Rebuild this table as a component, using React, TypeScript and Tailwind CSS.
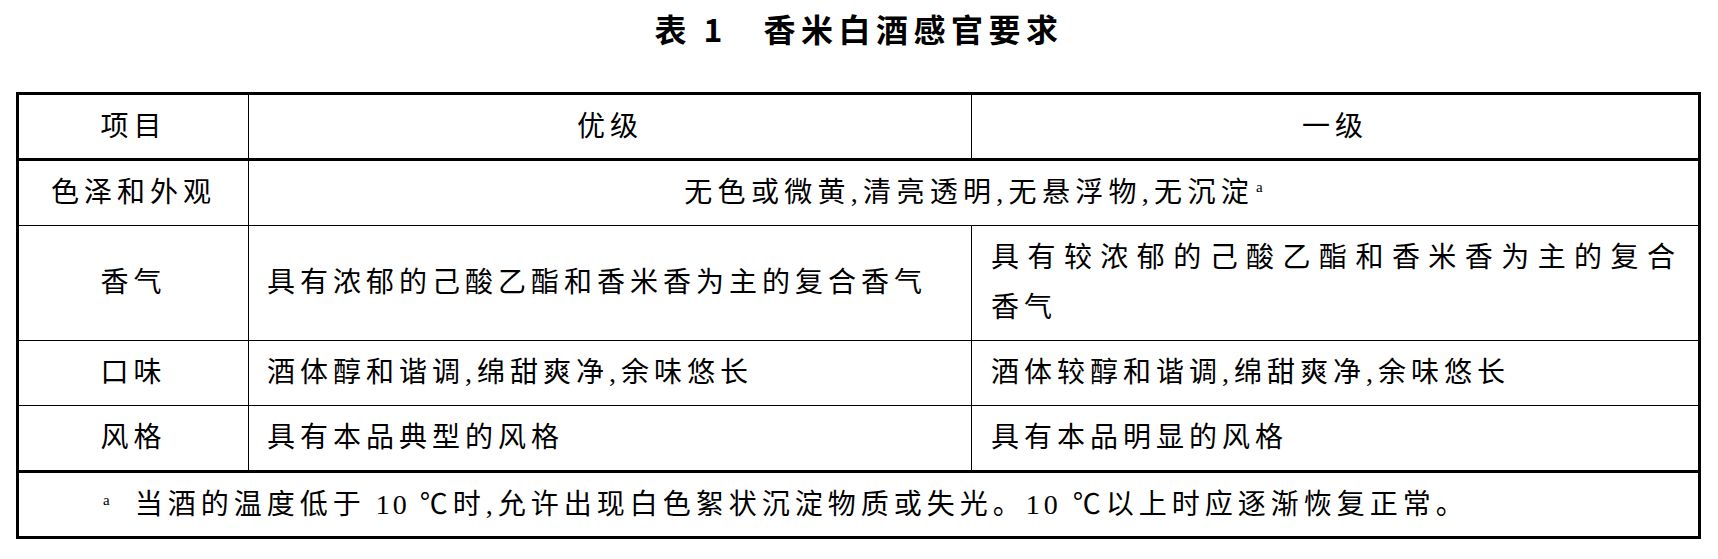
import React from "react";

const cellBase = "flex items-center";
const col1 = "w-[230px] shrink-0 border-r border-black flex items-center justify-center";
const col2 = "w-[723px] shrink-0 border-r border-black flex items-center";
const col3 = "flex-1 flex items-center";

function Sup() {
  return <span className="text-[15px] tracking-normal align-super leading-none ml-[2px]">a</span>;
}

export default function App() {
  return (
    <div className="w-[1718px] h-[559px] bg-white text-black overflow-hidden">
      <div className="h-[55px] flex items-center justify-center font-['Noto_Sans_CJK_SC',sans-serif] font-bold text-[32px] leading-none">
        <span>表</span>
        <span className="ml-[17px]">1</span>
        <span className="ml-[41px] tracking-[5.5px]">香米白酒感官要求</span>
      </div>
      <div className="mt-[37px] ml-[16px] w-[1685px] border-[3px] border-black font-['Liberation_Serif','Noto_Sans_CJK_SC',serif] text-[28px] tracking-[5px] leading-none">
        {/* header */}
        <div className="flex h-[66px] border-b-[3px] border-black">
          <div className={col1}>项目</div>
          <div className={col2 + " justify-center"}>优级</div>
          <div className={col3 + " justify-center"}>一级</div>
        </div>
        {/* row 2 */}
        <div className="flex h-[65px] border-b border-black">
          <div className={col1}>色泽和外观</div>
          <div className={"flex-1 " + cellBase + " justify-center"}>
            <span className="tracking-[5.3px]">
              无色或微黄,清亮透明,无悬浮物,无沉淀
              <Sup />
            </span>
          </div>
        </div>
        {/* row 3 */}
        <div className="flex h-[115px] border-b border-black">
          <div className={col1}>香气</div>
          <div className={col2 + " pl-[18px]"}>具有浓郁的己酸乙酯和香米香为主的复合香气</div>
          <div className={col3 + " pl-[19px] pr-[18px]"}>
            <div className="w-full leading-[50px]">
              <div className="text-justify [text-align-last:justify]">具有较浓郁的己酸乙酯和香米香为主的复合</div>
              <div>香气</div>
            </div>
          </div>
        </div>
        {/* row 4 */}
        <div className="flex h-[65px] border-b border-black">
          <div className={col1}>口味</div>
          <div className={col2 + " pl-[18px]"}>酒体醇和谐调,绵甜爽净,余味悠长</div>
          <div className={col3 + " pl-[19px]"}>酒体较醇和谐调,绵甜爽净,余味悠长</div>
        </div>
        {/* row 5 */}
        <div className="flex h-[67px] border-b-[3px] border-black">
          <div className={col1}>风格</div>
          <div className={col2 + " pl-[18px]"}>具有本品典型的风格</div>
          <div className={col3 + " pl-[19px]"}>具有本品明显的风格</div>
        </div>
        {/* footer */}
        <div className="flex h-[63px] items-center pl-[84px]">
          <span className="text-[15px] tracking-normal align-super leading-none self-start mt-[20px]">a</span>
          <span className="ml-[25px]">
            当酒的温度低于<span className="tracking-[3px]"> 10 </span>℃时,允许出现白色絮状沉淀物质或失光。<span className="tracking-[4px]">10 </span>℃以上时应逐渐恢复正常。
          </span>
        </div>
      </div>
    </div>
  );
}
